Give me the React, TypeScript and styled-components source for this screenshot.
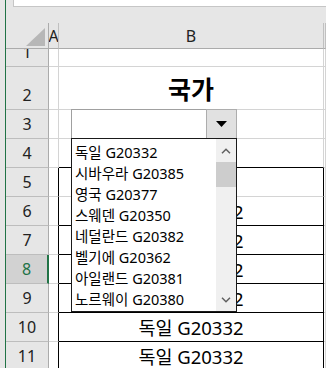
import React from "react";
import styled, { createGlobalStyle } from "styled-components";

const GlobalStyle = createGlobalStyle`
  *, *::before, *::after {
    box-sizing: border-box;
  }
  html, body {
    margin: 0;
    padding: 0;
  }
  body {
    background: #e6e6e6;
    font-family: "Noto Sans", "Noto Sans CJK KR", sans-serif;
    color: #000;
  }
`;

const Window = styled.div`
  display: flex;
  width: 326px;
  height: 368px;
  overflow: hidden;
  background: #e6e6e6;
`;

const SideStrip = styled.div`
  flex: none;
  width: 6px;
  border-right: 1px solid #217346;
`;

const Main = styled.div`
  flex: 1;
  min-width: 0;
  display: flex;
  flex-direction: column;
`;

const FormulaRow = styled.div`
  flex: none;
  display: flex;
  height: 7px;
  padding-left: 7px;
`;

const FormulaBox = styled.div`
  flex: 1;
  background: #fff;
  border-left: 1px solid #c6c6c6;
  border-bottom: 1px solid #c6c6c6;
`;

const Gap = styled.div`
  flex: none;
  height: 16px;
`;

const Sheet = styled.div`
  display: grid;
  grid-template-columns: 43px 10px 265px 1fr;
  grid-template-rows: 26px 18px 43px repeat(9, 29px);
  background: #fff;
`;

const Corner = styled.div`
  position: relative;
  background: #e6e6e6;
  border-right: 1px solid #ababab;
  border-bottom: 1px solid #ababab;

  &::after {
    content: "";
    position: absolute;
    right: 3px;
    bottom: 2px;
    width: 19px;
    height: 18px;
    background: #b7b7b7;
    clip-path: polygon(100% 0, 100% 100%, 0 100%);
  }
`;

const ColHead = styled.div`
  display: flex;
  align-items: center;
  justify-content: center;
  overflow: hidden;
  background: #e6e6e6;
  border-right: 1px solid #c0c0c0;
  border-bottom: 1px solid #ababab;
  font-size: 16px;
  color: #222;
`;

const RowHead = styled.div<{ $selected?: boolean }>`
  display: flex;
  align-items: flex-end;
  justify-content: center;
  overflow: hidden;
  padding-bottom: 3px;
  line-height: 22px;
  font-size: 16px;
  background: ${(p) => (p.$selected ? "#d2d2d2" : "#e6e6e6")};
  color: ${(p) => (p.$selected ? "#217346" : "#222")};
  border-bottom: 1px solid #bdbdbd;
  border-right: ${(p) =>
    p.$selected ? "2px solid #217346" : "1px solid #ababab"};
`;

const Cell = styled.div<{ $bottom?: boolean; $right?: boolean }>`
  position: relative;
  display: flex;
  align-items: center;
  justify-content: center;
  white-space: nowrap;
  border-right: 1px solid ${(p) => (p.$right ? "#000" : "#d4d4d4")};
  border-bottom: 1px solid ${(p) => (p.$bottom ? "#000" : "#d4d4d4")};
  font-size: 18.5px;
`;

const Title = styled.span`
  font-size: 25px;
  font-weight: 700;
`;

const Dropdown = styled.div`
  position: absolute;
  z-index: 5;
  top: 0;
  left: 12px;
  width: 166px;
  display: flex;
  flex-direction: column;
`;

const Combo = styled.div`
  display: flex;
  justify-content: flex-end;
  height: 30px;
  background: #fff;
  border-top: 1px solid #a0a0a0;
  border-left: 1px solid #a0a0a0;
  margin-top: -1px;
`;

const ComboButton = styled.div`
  display: flex;
  align-items: center;
  justify-content: center;
  width: 31px;
  height: 30px;
  margin-top: -1px;
  background: #e1e1e1;
  border: 1px solid #adadad;
`;

const ListBox = styled.div`
  display: flex;
  height: 174px;
  margin-top: -1px;
  background: #fff;
  border: 1px solid #1a1a1a;
`;

const Items = styled.ul`
  flex: 1;
  list-style: none;
  margin: 0;
  padding: 3px 0 0 3px;
  overflow: hidden;
`;

const Item = styled.li`
  height: 21px;
  line-height: 21px;
  font-size: 14.5px;
  white-space: nowrap;
`;

const ScrollBar = styled.div`
  flex: none;
  width: 20px;
  display: flex;
  flex-direction: column;
  background: #f0f0f0;
`;

const ScrollArrow = styled.div`
  flex: none;
  height: 23px;
  display: flex;
  align-items: center;
  justify-content: center;
`;

const Thumb = styled.div`
  flex: none;
  height: 25px;
  background: #cdcdcd;
`;

const Track = styled.div`
  flex: 1;
`;

const countries = [
  "독일 G20332",
  "시바우라 G20385",
  "영국 G20377",
  "스웨덴 G20350",
  "네덜란드 G20382",
  "벨기에 G20362",
  "아일랜드 G20381",
  "노르웨이 G20380",
];

const Chevron: React.FC<{ up?: boolean }> = ({ up }) => (
  <svg width="10" height="6" viewBox="0 0 10 6">
    <path
      d={up ? "M1 5.2 L5 1.2 L9 5.2" : "M1 0.8 L5 4.8 L9 0.8"}
      fill="none"
      stroke="#606060"
      strokeWidth="1.5"
    />
  </svg>
);

const rows = [1, 2, 3, 4, 5, 6, 7, 8, 9, 10, 11];

const App: React.FC = () => {
  const renderB = (n: number) => {
    if (n === 2) return <Title>국가</Title>;
    if (n === 3)
      return (
        <Dropdown>
          <Combo>
            <ComboButton>
              <svg width="11" height="6" viewBox="0 0 11 6">
                <path d="M0 0 H11 L5.5 6 Z" fill="#000" />
              </svg>
            </ComboButton>
          </Combo>
          <ListBox>
            <Items>
              {countries.map((c) => (
                <Item key={c}>{c}</Item>
              ))}
            </Items>
            <ScrollBar>
              <ScrollArrow>
                <Chevron up />
              </ScrollArrow>
              <Thumb />
              <Track />
              <ScrollArrow>
                <Chevron />
              </ScrollArrow>
            </ScrollBar>
          </ListBox>
        </Dropdown>
      );
    if (n >= 6) return "독일 G20332";
    return null;
  };

  return (
    <>
      <GlobalStyle />
      <Window>
        <SideStrip />
        <Main>
          <FormulaRow>
            <FormulaBox />
          </FormulaRow>
          <Gap />
          <Sheet>
            <Corner />
            <ColHead>A</ColHead>
            <ColHead>B</ColHead>
            <ColHead />
            {rows.map((n) => (
              <React.Fragment key={n}>
                <RowHead $selected={n === 8}>{n}</RowHead>
                <Cell $right={n >= 5} />
                <Cell $right={n >= 5} $bottom={n === 4 || n >= 6}>
                  {renderB(n)}
                </Cell>
                <Cell />
              </React.Fragment>
            ))}
          </Sheet>
        </Main>
      </Window>
    </>
  );
};

export default App;
